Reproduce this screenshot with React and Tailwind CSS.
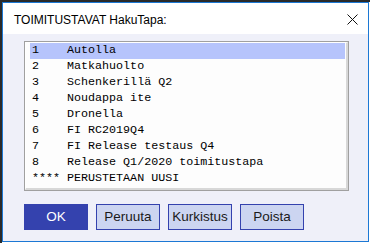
import React from 'react';

const rows = [
  ['1', 'Autolla'],
  ['2', 'Matkahuolto'],
  ['3', 'Schenkerillä Q2'],
  ['4', 'Noudappa ite'],
  ['5', 'Dronella'],
  ['6', 'FI RC2019Q4'],
  ['7', 'FI Release testaus Q4'],
  ['8', 'Release Q1/2020 toimitustapa'],
  ['****', 'PERUSTETAAN UUSI'],
];

const mono = "font-['Liberation_Mono','Courier_New',monospace]";

function Btn({ primary, children }) {
  return (
    <button
      className={
        primary
          ? 'w-[64px] h-[26px] bg-[#3442ae] border border-[#3442ae] text-white text-[13.5px]'
          : 'w-[64px] h-[26px] bg-[#ccd5f1] border border-[#3442ae] text-[#1a1a1a] text-[13.5px]'
      }
    >
      {children}
    </button>
  );
}

export default function App() {
  return (
    <div className="w-[370px] h-[243px] bg-white border-t-2 border-l-2 border-[#2a2a2a] font-['Liberation_Sans',Arial,sans-serif]">
      <div className="w-[367px] h-[240px] border border-[#1c78d4] flex flex-col">
        <div className="h-[31px] bg-white flex items-center justify-between pl-[11px] pr-[10px] pt-[3px]">
          <span className="text-[12px] text-black">TOIMITUSTAVAT HakuTapa:</span>
          <svg width="11" height="11" viewBox="0 0 11 11" className="mb-[1px]">
            <path d="M0.5 0.5 L10.5 10.5 M10.5 0.5 L0.5 10.5" stroke="#111" strokeWidth="1" />
          </svg>
        </div>
        <div className="flex-1 bg-[#eff0f9] pl-[21px] pt-[7px]">
          <div className="w-[325px] h-[150px] border border-[#a0a0a0]">
            <div className="h-full border-t border-l border-white border-r-2 border-b-2 border-r-[#d8d8d8] border-b-[#d8d8d8] bg-[#fdfdfd] pl-[4px] pr-[1px] pb-[1px]">
              {rows.map(([n, t], i) => (
                <div
                  key={n}
                  className={
                    'h-[16px] flex items-center whitespace-pre text-[11.7px] text-black ' +
                    mono +
                    (i === 0 ? ' bg-[#b6c4fc]' : '')
                  }
                >
                  <span className="pl-[2px] w-[37px]">{n}</span>
                  <span>{t}</span>
                </div>
              ))}
            </div>
          </div>
          <div className="flex gap-[8px] mt-[13px]">
            <Btn primary>OK</Btn>
            <Btn>Peruuta</Btn>
            <Btn>Kurkistus</Btn>
            <Btn>Poista</Btn>
          </div>
        </div>
      </div>
    </div>
  );
}
